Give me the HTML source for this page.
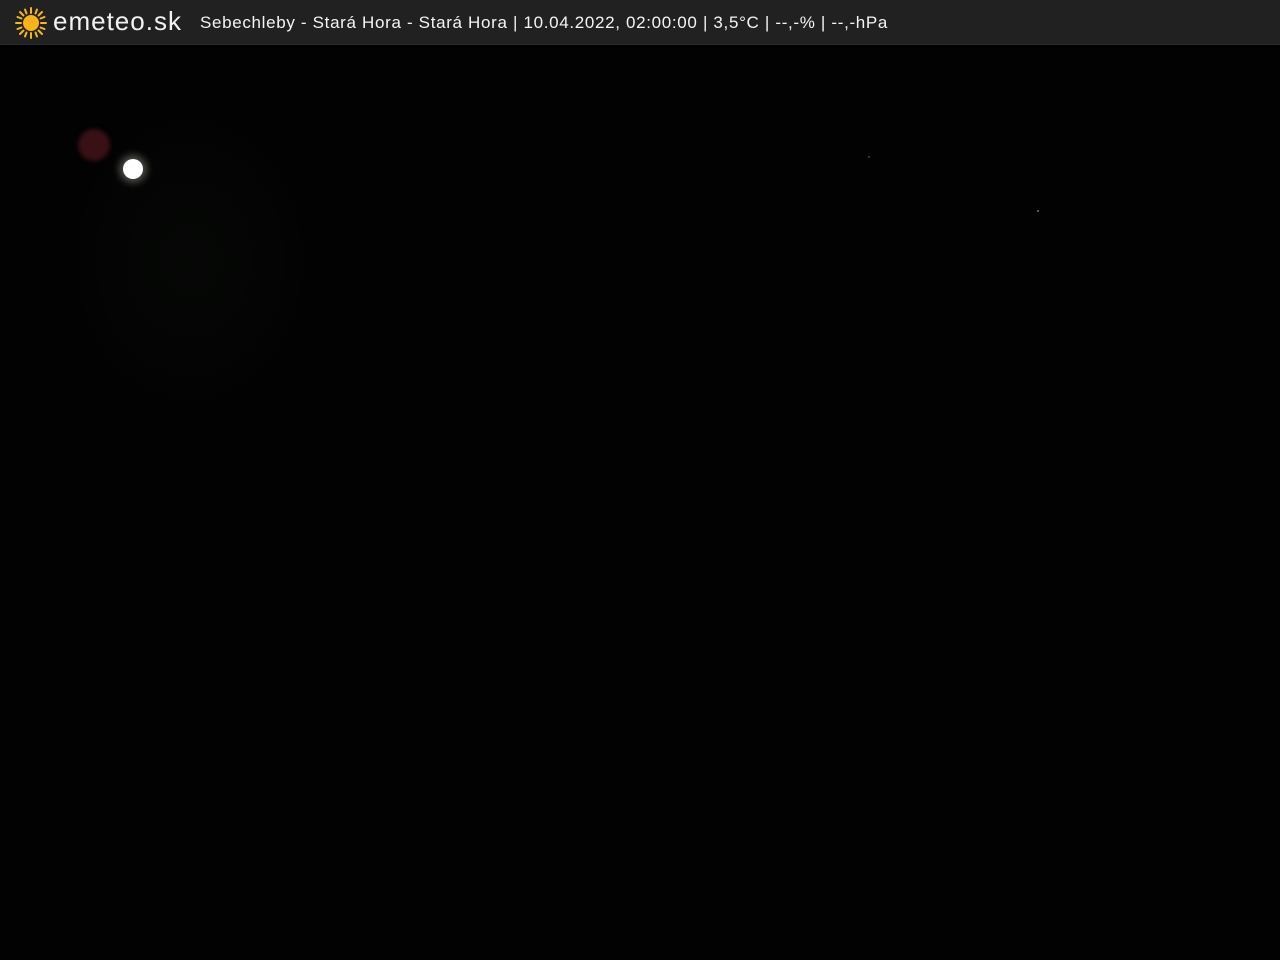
<!DOCTYPE html>
<html><head><meta charset="utf-8"><style>
html,body{margin:0;padding:0;width:1280px;height:960px;background:#020202;overflow:hidden}
.bar{position:absolute;left:0;top:0;width:1280px;height:44px;background:#212121;border-bottom:1px solid #2a2a2a}
.logo{position:absolute;left:53px;top:6px;font:26px "Liberation Sans",sans-serif;color:#f2f2f2;letter-spacing:1px}
.t{position:absolute;left:200px;top:13px;font:17px "Liberation Sans",sans-serif;color:#f4f4f4;white-space:nowrap;letter-spacing:0.67px}
.moon{position:absolute;left:123px;top:159px;width:20px;height:20px;border-radius:50%;background:#fff;box-shadow:0 0 8px 4px rgba(255,255,240,.3)}
.red{position:absolute;left:78px;top:129px;width:32px;height:32px;border-radius:50%;background:rgba(110,30,40,.5);filter:blur(2px)}
.glow{position:absolute;left:60px;top:100px;width:260px;height:320px;border-radius:50%;background:radial-gradient(rgba(15,22,15,.25),rgba(0,0,0,0) 70%)}
.s{position:absolute;width:2px;height:2px;background:#555}
</style></head><body>
<div class="glow"></div>
<div class="bar">
<svg style="position:absolute;left:15px;top:7px" width="32" height="32" viewBox="0 0 32 32">
<g stroke="#f5b81c" stroke-width="2" stroke-linecap="round">
<line x1="16" y1="1" x2="16" y2="6"/><line x1="16" y1="26" x2="16" y2="31"/>
<line x1="1" y1="16" x2="6" y2="16"/><line x1="26" y1="16" x2="31" y2="16"/>
<line x1="5" y1="5" x2="8.5" y2="8.5"/><line x1="23.5" y1="23.5" x2="27" y2="27"/>
<line x1="27" y1="5" x2="23.5" y2="8.5"/><line x1="8.5" y1="23.5" x2="5" y2="27"/>
<line x1="10" y1="2.5" x2="11.5" y2="6.5"/><line x1="22" y1="2.5" x2="20.5" y2="6.5"/>
<line x1="10" y1="29.5" x2="11.5" y2="25.5"/><line x1="22" y1="29.5" x2="20.5" y2="25.5"/>
<line x1="2.5" y1="10" x2="6.5" y2="11.5"/><line x1="2.5" y1="22" x2="6.5" y2="20.5"/>
<line x1="29.5" y1="10" x2="25.5" y2="11.5"/><line x1="29.5" y1="22" x2="25.5" y2="20.5"/>
</g>
<circle cx="16" cy="16" r="8" fill="#f9b21a"/></svg>
<div class="logo">emeteo.sk</div>
<div class="t">Sebechleby - Stará Hora - Stará Hora | 10.04.2022, 02:00:00 | 3,5°C | --,-% | --,-hPa</div>
</div>
<div class="red"></div>
<div class="moon"></div>
<div class="s" style="left:1037px;top:210px"></div>
<div class="s" style="left:868px;top:156px;background:#333"></div>
</body></html>
